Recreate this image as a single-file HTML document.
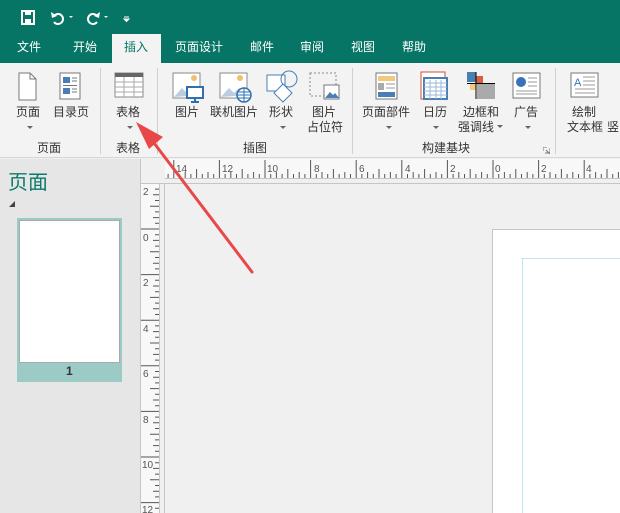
<!DOCTYPE html>
<html><head><meta charset="utf-8"><style>
*{margin:0;padding:0;box-sizing:border-box}
body{width:620px;height:513px;overflow:hidden;position:relative;background:#f0f0f0;font-family:"Liberation Sans","Noto Sans CJK SC",sans-serif;font-size:12px;color:#333}
.a{position:absolute}
.tab{position:absolute;top:34px;height:29px;line-height:27px;color:#fff;font-size:12px}
.lbl{position:absolute;font-size:12px;color:#333;white-space:nowrap;text-align:center}
.dd{position:absolute;width:0;height:0;border-left:3px solid transparent;border-right:3px solid transparent;border-top:3px solid #666}
.sep{position:absolute;top:68px;width:1px;height:86px;background:#d0d0d0}
</style></head><body>
<div class="a" style="left:0;top:0;width:620px;height:63px;background:#077565"></div>
<svg class="a" style="left:20px;top:9px" width="120" height="18" viewBox="0 0 120 18">
<rect x="2" y="2" width="12" height="13" fill="none" stroke="#fff" stroke-width="2"/>
<rect x="5" y="2" width="6" height="4" fill="#fff"/><rect x="5" y="10" width="6" height="5" fill="#fff"/>
<path d="M35 6 a5 5 0 1 1 -1 7" fill="none" stroke="#fff" stroke-width="2"/><path d="M31 3 l1 6 l5 -2z" fill="#fff"/>
<path d="M49 7 l4 0 l-2 2z" fill="#fff"/>
<path d="M76 6 a5 5 0 1 0 1 7" fill="none" stroke="#fff" stroke-width="2"/><path d="M80 3 l-1 6 l-5 -2z" fill="#fff"/>
<path d="M84 7 l4 0 l-2 2z" fill="#fff"/>
<path d="M104 8 h5 M104 10 l5 0 l-2.5 2.5z" stroke="#fff" fill="#fff"/>
</svg>
<div class="tab" style="left:17px">文件</div>
<div class="a" style="left:112px;top:34px;width:49px;height:29px;background:#f3f3f3"></div>
<div class="tab" style="left:73px">开始</div>
<div class="tab" style="left:124px;color:#077565">插入</div>
<div class="tab" style="left:175px">页面设计</div>
<div class="tab" style="left:250px">邮件</div>
<div class="tab" style="left:300px">审阅</div>
<div class="tab" style="left:351px">视图</div>
<div class="tab" style="left:402px">帮助</div>
<div class="a" style="left:0;top:63px;width:620px;height:95px;background:#f3f3f3;border-bottom:1px solid #d6d6d6"></div>
<div class="sep" style="left:100px"></div><div class="sep" style="left:157px"></div><div class="sep" style="left:352px"></div><div class="sep" style="left:555px"></div>
<svg class="a" style="left:0;top:63px" width="620" height="45" viewBox="0 63 620 45">
<path d="M19 73 h11 l6 6 v21 h-17z" fill="#fff" stroke="#777"/><path d="M30 73 v6 h6" fill="none" stroke="#777"/>
<rect x="60" y="73" width="20" height="26" fill="#fff" stroke="#777"/>
<rect x="63" y="77" width="7" height="6" fill="#4a7fb5"/><rect x="63" y="88" width="7" height="6" fill="#4a7fb5"/>
<path d="M72 78h5M72 81h5M72 89h5M72 92h5M63 85.5h14" stroke="#777"/>
<rect x="115" y="73" width="28" height="24" fill="#fff" stroke="#888"/><rect x="115" y="73" width="28" height="4" fill="#666"/>
<path d="M115 82h28M115 87h28M115 92h28M124 77v20M134 77v20" stroke="#aaa"/>
<rect x="173" y="73" width="27" height="25" fill="#fff" stroke="#888"/><path d="M174 97 l8 -9 l5 5 l5 -5 l7 7z" fill="#b8cde0"/><circle cx="194" cy="78" r="3" fill="#f0c070"/>
<rect x="187" y="87" width="16" height="11" fill="#fff" stroke="#2f6fb0" stroke-width="2"/><path d="M195 98v3M191 102h8" stroke="#2f6fb0" stroke-width="2"/>
<rect x="220" y="73" width="27" height="25" fill="#fff" stroke="#888"/><path d="M221 97 l8 -9 l5 5 l5 -5 l7 7z" fill="#b8cde0"/><circle cx="240" cy="78" r="3" fill="#f0c070"/>
<circle cx="244" cy="95" r="7" fill="#fff" stroke="#2f6fb0" stroke-width="1.5"/><path d="M237 95h14M244 88v14M238 92h12M238 98h12" stroke="#2f6fb0"/>
<rect x="267" y="75" width="18" height="16" fill="#fff" stroke="#4a7fb5"/><circle cx="289" cy="79" r="8" fill="none" stroke="#4a7fb5"/><path d="M283 84l9 9l-9 9l-9 -9z" fill="#fff" stroke="#4a7fb5"/>
<rect x="310" y="73" width="26" height="23" fill="none" stroke="#888" stroke-dasharray="2,2"/><rect x="324" y="85" width="15" height="14" fill="#fff" stroke="#777"/><path d="M325 98l5-6 3 3 2-2 4 5z" fill="#4a7fb5"/>
<rect x="376" y="73" width="21" height="26" fill="#fff" stroke="#777"/><rect x="378" y="76" width="17" height="5" fill="#f0c880"/><rect x="378" y="83" width="6" height="7" fill="#aaa"/><path d="M386 84h9M386 88h9" stroke="#999"/><rect x="378" y="92" width="17" height="5" fill="#4a7fb5"/>
<rect x="421" y="72" width="24" height="27" fill="#fff" stroke="#d05030"/><rect x="424" y="78" width="23" height="21" fill="#fff" stroke="#4a7fb5" stroke-width="2"/><path d="M424 83h23M424 87h23M424 91h23M424 95h23M430 80v19M436 80v19M441 80v19" stroke="#9ab8d8"/>
<rect x="467" y="72" width="9" height="10" fill="#4a7fb5"/><rect x="476" y="76" width="7" height="7" fill="#d9603a"/><rect x="470" y="84" width="6" height="6" fill="#f0c880"/><rect x="477" y="84" width="18" height="15" fill="#aaa"/><path d="M476 72v27M467 83.5h28" stroke="#000"/>
<rect x="513" y="73" width="27" height="25" fill="#fff" stroke="#777"/><circle cx="521" cy="82" r="5" fill="#3a72b8"/><path d="M528 78h9M528 82h9M528 86h9M516 91h21M516 94h21" stroke="#999"/>
<rect x="571" y="73" width="27" height="24" fill="#fff" stroke="#777"/><text x="574" y="86" font-size="11" fill="#3a72b8" font-family="Liberation Sans">A</text><path d="M583 77h12M583 81h12M583 85h12M575 89h20M575 93h20" stroke="#999"/>
</svg>
<div class="lbl" style="left:16px;top:103px">页面</div><div class="dd" style="left:27px;top:126px"></div>
<div class="lbl" style="left:53px;top:103px">目录页</div>
<div class="lbl" style="left:116px;top:103px">表格</div><div class="dd" style="left:127px;top:126px"></div>
<div class="lbl" style="left:175px;top:103px">图片</div>
<div class="lbl" style="left:210px;top:103px">联机图片</div>
<div class="lbl" style="left:269px;top:103px">形状</div><div class="dd" style="left:280px;top:126px"></div>
<div class="lbl" style="left:312px;top:103px">图片</div>
<div class="lbl" style="left:307px;top:118px">占位符</div>
<div class="lbl" style="left:362px;top:103px">页面部件</div><div class="dd" style="left:386px;top:126px"></div>
<div class="lbl" style="left:423px;top:103px">日历</div><div class="dd" style="left:433px;top:126px"></div>
<div class="lbl" style="left:463px;top:103px">边框和</div>
<div class="lbl" style="left:458px;top:118px">强调线</div><div class="dd" style="left:497px;top:125px"></div>
<div class="lbl" style="left:514px;top:103px">广告</div><div class="dd" style="left:525px;top:126px"></div>
<div class="lbl" style="left:572px;top:103px">绘制</div>
<div class="lbl" style="left:567px;top:118px">文本框</div><div class="lbl" style="left:607px;top:118px">竖</div>
<div class="lbl" style="left:37px;top:139px">页面</div>
<div class="lbl" style="left:116px;top:139px">表格</div>
<div class="lbl" style="left:243px;top:139px">插图</div>
<div class="lbl" style="left:422px;top:139px">构建基块</div>
<svg class="a" style="left:543px;top:147px" width="7" height="7"><path d="M0 0h4M0 0v4M2 6h5v-5M3 3l4 4" stroke="#777" fill="none"/></svg>
<div class="a" style="left:0;top:159px;width:140px;height:354px;background:#e6e6e6"></div>
<div class="a" style="left:8px;top:166px;font-size:20px;color:#0b7a6b">页面</div>
<svg class="a" style="left:9px;top:201px" width="7" height="7"><path d="M6 0v6h-6z" fill="#444"/></svg>
<div class="a" style="left:17px;top:218px;width:105px;height:164px;background:#9ccbc6"></div>
<div class="a" style="left:19px;top:220px;width:101px;height:143px;background:#fff;border:1px solid #aaa"></div>
<div class="a" style="left:66px;top:364px;font-weight:bold;font-size:12px;color:#333">1</div>
<div class="a" style="left:140px;top:159px;width:1px;height:354px;background:#c6c6c6"></div>
<svg class="a" style="left:141px;top:159px" width="479" height="354" viewBox="141 159 479 354">
<rect x="141" y="159" width="479" height="19" fill="#f8f8f8"/>
<rect x="141" y="159" width="19" height="354" fill="#f8f8f8"/>
<rect x="141" y="159" width="24" height="24" fill="#f0f0f0"/>
<path d="M165 178.5H620M165 183.5H620M159.5 183V513M164.5 183V513M141 183.5H165" stroke="#c6c6c6"/>
<g font-size="10" fill="#555" font-family="Liberation Sans">
<text x="176" y="172">14</text><text x="222" y="172">12</text><text x="267" y="172">10</text><text x="314" y="172">8</text><text x="359" y="172">6</text><text x="405" y="172">4</text><text x="450" y="172">2</text><text x="495" y="172">0</text><text x="541" y="172">2</text><text x="586" y="172">4</text>
<text x="143" y="195">2</text><text x="143" y="241">0</text><text x="143" y="286">2</text><text x="143" y="332">4</text><text x="143" y="377">6</text><text x="143" y="423">8</text><text x="142" y="468">10</text><text x="142" y="513">12</text>
</g>
<path id="tk" stroke="#555" fill="none" d=""/>
<rect x="492.5" y="229.5" width="140" height="300" fill="#fff" stroke="#c6c6c6"/>
<path d="M522.5 258.5V513M522.5 258.5H620" stroke="#7fc8e8" stroke-dasharray="1,1"/>
</svg>
<svg class="a" style="left:0;top:0" width="620" height="513">
<path d="M252 272 L154 143" stroke="#e84848" stroke-width="3" stroke-linecap="round"/>
<path d="M136 122 L163 137 L149 149z" fill="#e84848"/>
</svg>
<script>
var d="";
for(var i=-60;i<=24;i++){var x=493+i*5.7;if(x<166||x>620)continue;var L=(i%8==0)?18:(i%4==0)?9:(i%2==0)?6:4;d+="M"+x.toFixed(1)+" "+(178-L)+"V178";}
for(var i=-8;i<=60;i++){var y=229+i*5.7;if(y<184||y>513)continue;var L=(i%8==0)?18:(i%4==0)?9:(i%2==0)?6:4;d+="M"+(159-L)+" "+y.toFixed(1)+"H159";}
document.getElementById("tk").setAttribute("d",d);
</script>
</body></html>
